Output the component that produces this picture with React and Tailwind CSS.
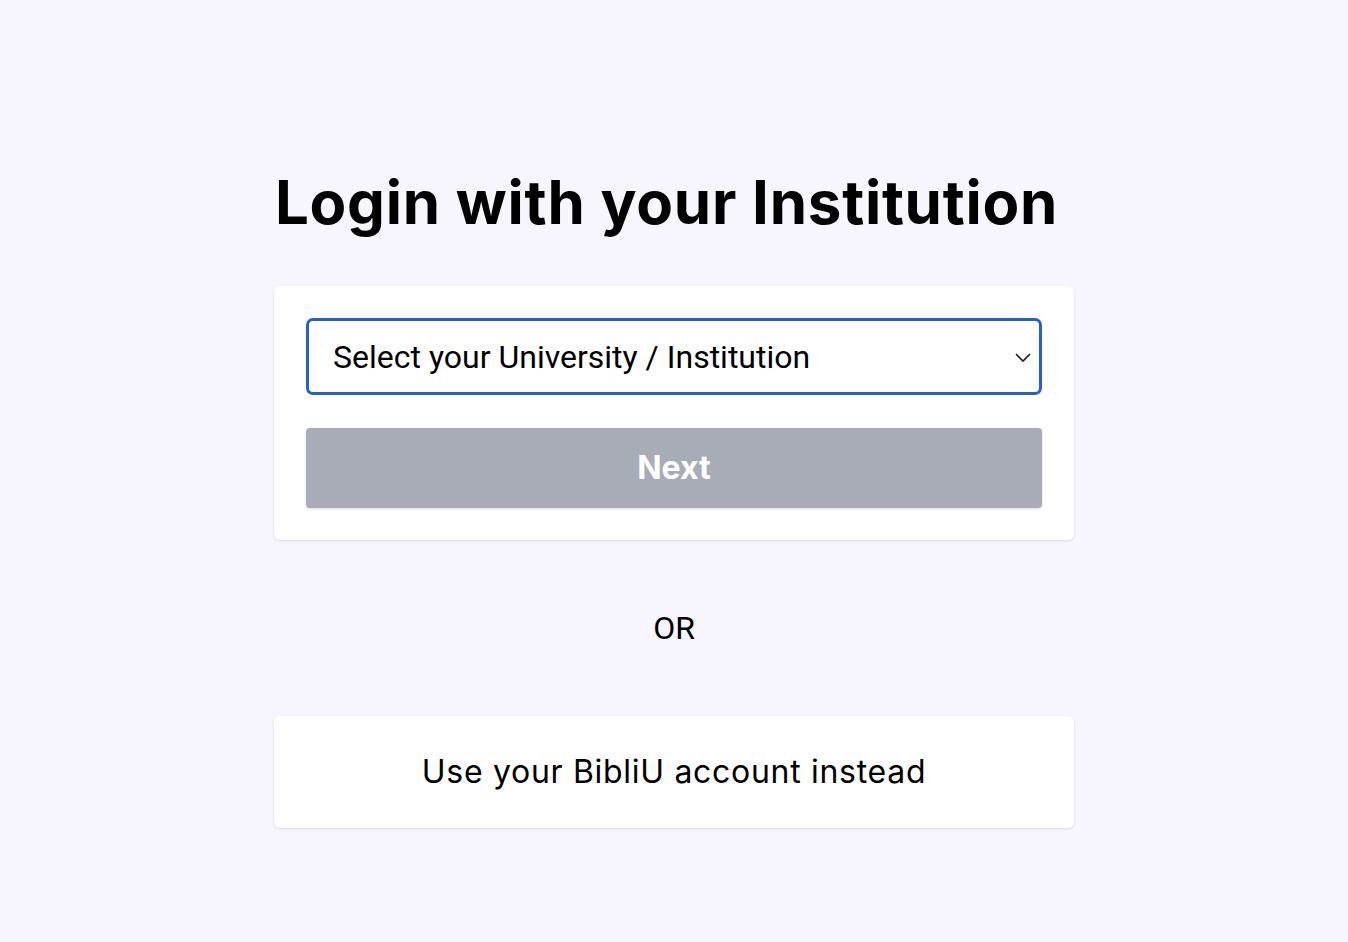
import React from 'react';

const App = () => {
    return (
        <div className="min-h-screen bg-[#f7f5fe] flex flex-col items-center pt-[166px]" style={{ fontFamily: 'Inter, "Open Sans", sans-serif' }}>
            <h1 className="mr-[15px] text-[60px] leading-[72px] font-bold text-black tracking-[0.75px]">
                Login with your Institution
            </h1>

            <div className="mt-[48px] w-[800px] bg-white rounded-md shadow-[0_1px_3px_rgba(0,0,0,0.12)] p-8">
                <div className="relative h-[77px] border-[3px] border-[#2462c9] rounded-[7px] flex items-center pl-[24px]">
                    <span className="text-[32px] text-black" style={{ fontFamily: 'Roboto, sans-serif' }}>
                        Select your University / Institution
                    </span>
                    <svg className="absolute right-[6px] top-1/2 -translate-y-1/2" width="20" height="20" viewBox="0 0 20 20" fill="none">
                        <path d="M3 7l7 7 7-7" stroke="#1f1f1f" strokeWidth="1.6" />
                    </svg>
                </div>
                <button className="mt-[33px] w-full h-[80px] bg-[#a8acb7] rounded-[4px] shadow-[0_1px_3px_rgba(0,0,0,0.15)] text-white text-[32px] font-bold">
                    Next
                </button>
            </div>

            <div className="mt-[66px] text-[32px] leading-[44px] text-black" style={{ fontFamily: 'Roboto, sans-serif' }}>OR</div>

            <div className="mt-[66px] w-[800px] h-[112px] bg-white rounded-md shadow-[0_1px_3px_rgba(0,0,0,0.12)] flex items-center justify-center">
                <span className="text-[32px] text-black tracking-[0.7px]">Use your BibliU account instead</span>
            </div>
        </div>
    );
};

export default App;
